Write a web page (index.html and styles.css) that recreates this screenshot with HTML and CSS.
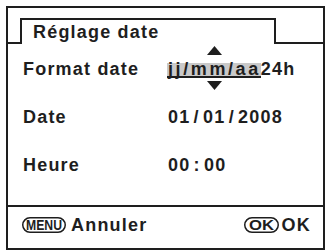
FILE: index.html
```html
<!DOCTYPE html>
<html lang="fr">
<head>
<meta charset="utf-8">
<title>Réglage date</title>
<link rel="stylesheet" href="styles.css">
</head>
<body>
<div class="screen">
  <div class="header">
    <div class="hline hline-left"></div>
    <div class="tab">Réglage date</div>
    <div class="hline hline-right"></div>
  </div>
  <div class="rows">
    <div class="row">
      <span class="label">Format date</span>
      <span class="value"><span class="sel">jj/mm/aa<svg class="arrow arrow-up" width="15" height="9" viewBox="0 0 15 9"><polygon points="7.5,0 15,9 0,9"/></svg><svg class="arrow arrow-down" width="15" height="9" viewBox="0 0 15 9"><polygon points="0,0 15,0 7.5,9"/></svg></span>24h</span>
    </div>
    <div class="row">
      <span class="label">Date</span>
      <span class="value spaced">01 / 01 / 2008</span>
    </div>
    <div class="row">
      <span class="label">Heure</span>
      <span class="value spaced">00 : 00</span>
    </div>
  </div>
  <div class="footer">
    <div class="action action-menu">
      <svg class="pill" width="44" height="16" viewBox="0 0 44 16"><rect x="0.75" y="0.75" width="42.5" height="14.5" rx="7.25" ry="7.25"/><text x="22" y="13" text-anchor="middle" textLength="36" lengthAdjust="spacingAndGlyphs">MENU</text></svg>
      <span>Annuler</span>
    </div>
    <div class="action action-ok">
      <svg class="pill" width="35" height="16" viewBox="0 0 35 16"><rect x="0.75" y="0.75" width="33.5" height="14.5" rx="7.25" ry="7.25"/><text x="17.5" y="13" text-anchor="middle" textLength="25" lengthAdjust="spacingAndGlyphs">OK</text></svg>
      <span>OK</span>
    </div>
  </div>
</div>
</body>
</html>
```
FILE: styles.css
```css
html, body {
  margin: 0;
  padding: 0;
  background: #ffffff;
}

body {
  font-family: "Liberation Sans", Arial, sans-serif;
  font-weight: bold;
  font-size: 18px;
  letter-spacing: 1.2px;
  color: #1e1e1e;
}

.screen {
  margin: 6px 0 0 6px;
  width: 319px;
  height: 244px;
  box-sizing: border-box;
  border: 2px solid #1e1e1e;
  display: flex;
  flex-direction: column;
}

.header {
  display: flex;
  height: 36px;
  padding-top: 10px;
  box-sizing: border-box;
  flex: none;
}

.hline {
  border-bottom: 2px solid #1e1e1e;
}

.hline-left {
  width: 12px;
}

.hline-right {
  flex: 1;
}

.tab {
  width: 256px;
  box-sizing: border-box;
  border: 2px solid #1e1e1e;
  border-bottom: none;
  padding: 2px 0 0 11px;
  line-height: 20px;
}

.rows {
  flex: 1;
  padding: 1px 0 0 15px;
}

.row {
  height: 48px;
  display: flex;
  align-items: center;
  line-height: 20px;
}

.label {
  width: 145px;
  flex: none;
}

.value {
  white-space: nowrap;
}

.spaced {
  word-spacing: -3px;
}

.sel {
  position: relative;
  display: inline-block;
  height: 13px;
  line-height: 13px;
  background: #c9c9c9;
  border-bottom: 2px solid #1e1e1e;
  letter-spacing: 2.6px;
  margin-left: -1px;
  padding-left: 1px;
}

.arrow {
  position: absolute;
  left: 40px;
  fill: #1e1e1e;
}

.arrow-up {
  top: -17px;
}

.arrow-down {
  top: 18px;
}

.footer {
  flex: none;
  height: 43px;
  box-sizing: border-box;
  border-top: 2px solid #1e1e1e;
  display: flex;
  justify-content: space-between;
  align-items: flex-start;
  padding: 8px 12px 0 14px;
  line-height: 20px;
}

.action {
  display: flex;
  align-items: center;
}

.action-menu {
  gap: 5px;
}

.action-ok {
  gap: 3px;
}

.pill {
  display: block;
  overflow: visible;
}

.pill rect {
  fill: none;
  stroke: #1e1e1e;
  stroke-width: 1.5;
}

.pill text {
  font-family: "Liberation Sans", Arial, sans-serif;
  font-weight: bold;
  font-size: 14px;
  letter-spacing: 0;
  fill: #1e1e1e;
}
```
